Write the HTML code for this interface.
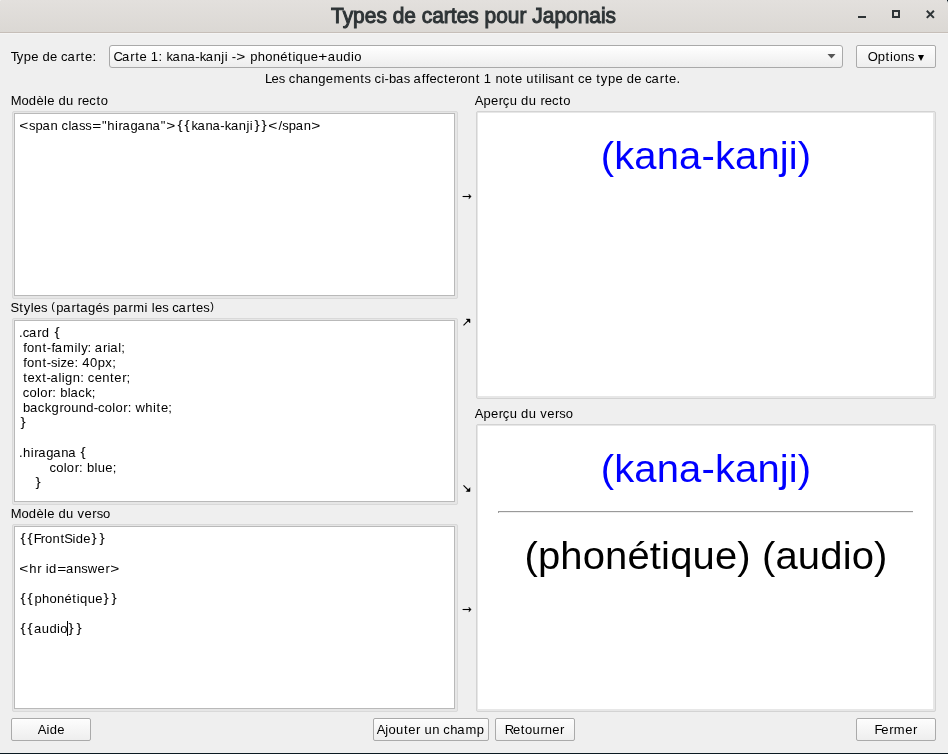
<!DOCTYPE html>
<html><head><meta charset="utf-8"><title>Types de cartes pour Japonais</title>
<style>
html,body{margin:0;padding:0}
body{width:948px;height:754px;position:relative;overflow:hidden;background:#efefef;font-family:"Liberation Sans",sans-serif;color:#000}
.a{position:absolute}
.layer{position:absolute;left:0;top:0;width:948px;height:754px;will-change:transform}
.t{position:absolute;white-space:pre;font-size:13.0px;line-height:15px;color:#000}
.t i{position:absolute;top:0;font-style:normal}
.te{position:absolute;border:1px solid #d9d9d9;border-radius:2px;background:#e6e6e6}
.te2{position:absolute;left:1px;top:1px;right:2px;bottom:2px}
.te3{width:100%;height:100%;box-sizing:border-box;border:1px solid #b9b9b9;background:#fff}
.pv{position:absolute;border:1px solid #d3d3d3;border-radius:2px;background:#e7e7e7}
.pvi{position:absolute;background:#fff}
.btn{position:absolute;border:1px solid #aaaaaa;border-radius:2px;background:linear-gradient(#fdfdfd,#eeeeee);box-shadow:inset 0 1px 0 #fff}
.card{position:absolute;white-space:pre;font-size:40px;line-height:46px;transform-origin:0 37px;transform:scale(1,0.955);letter-spacing:0.14px;left:476px;width:460px;text-align:center}
</style></head><body>
<div class="a" style="left:0;top:0;width:948px;height:32px;background:linear-gradient(#e3e0dd,#dbd8d4)"></div>
<div class="a" style="left:0;top:0;width:1px;height:1px;background:#ecebe9"></div>
<div class="a" style="left:947px;top:0;width:1px;height:1px;background:#0b1a22"></div>
<div class="a" style="left:947px;top:1px;width:1px;height:1px;background:#8c9296"></div>
<div class="a" style="left:947px;top:2px;width:1px;height:1px;background:#cdcfcf"></div>
<div class="a" style="left:0;top:32px;width:948px;height:1px;background:#c6beb8"></div>
<div class="a" style="left:0;top:33px;width:948px;height:1px;background:#f4f4f4"></div>
<div class="a" style="left:858px;top:16px;width:8px;height:2px;background:#2e3436"></div>
<div class="a" style="left:892px;top:10px;width:4px;height:4px;border:2px solid #2e3436"></div>
<svg class="a" style="left:925px;top:9px" width="11" height="11" viewBox="0 0 11 11"><path d="M1.8 1.8 L8.9 8.9 M8.9 1.8 L1.8 8.9" stroke="#2e3436" stroke-width="2"/></svg>

<div class="a" style="left:109px;top:45px;width:732px;height:21px;border:1px solid #a9a9a9;border-radius:3px;background:linear-gradient(#ffffff,#ededed)"></div>
<svg class="a" style="left:827px;top:53px" width="10" height="7" viewBox="0 0 10 7"><path d="M0.5 1 L8.5 1 L4.5 5.5 Z" fill="#555"/></svg>
<div class="btn" style="left:856px;top:45px;width:78px;height:21px"></div>
<svg class="a" style="left:917px;top:54px" width="8" height="8" viewBox="0 0 8 8"><path d="M1 1 L7 1 L4 7 Z" fill="#000"/></svg>

<div class="te" style="left:12px;top:111px;width:444px;height:186px"><div class="te2"><div class="te3"></div></div></div>
<div class="te" style="left:12px;top:318px;width:444px;height:185px"><div class="te2"><div class="te3"></div></div></div>
<div class="te" style="left:12px;top:524px;width:444px;height:186px"><div class="te2"><div class="te3"></div></div></div>
<div class="pv" style="left:476px;top:111px;width:458px;height:286px"><div class="pvi" style="left:1px;top:1px;width:455px;height:283px"></div></div>
<div class="pv" style="left:476px;top:424px;width:458px;height:286px"><div class="pvi" style="left:1px;top:1px;width:455px;height:283px"></div></div>

<svg class="a" style="left:456px;top:186px" width="20" height="20" viewBox="456 186 20 20"><path d="M462.6 196.5 L470 196.5" stroke="#000" stroke-width="1.1"/><path d="M468.9 194.3 L471.1 196.5 L468.9 198.7 L469.7 196.5 Z" fill="#000" stroke="#000" stroke-width="0.6" stroke-linejoin="round"/></svg>
<svg class="a" style="left:456px;top:599px" width="20" height="20" viewBox="456 186 20 20"><path d="M462.6 196.5 L470 196.5" stroke="#000" stroke-width="1.1"/><path d="M468.9 194.3 L471.1 196.5 L468.9 198.7 L469.7 196.5 Z" fill="#000" stroke="#000" stroke-width="0.6" stroke-linejoin="round"/></svg>
<svg class="a" style="left:456px;top:312px" width="20" height="20" viewBox="456 312 20 20"><path d="M463.5 325.3 L469.2 319.6" stroke="#000" stroke-width="1.1"/><path d="M466.2 319.1 L470 319.1 L470 322.9 Z" fill="#000" stroke="#000" stroke-width="0.5" stroke-linejoin="round"/></svg>
<svg class="a" style="left:456px;top:478px" width="20" height="20" viewBox="456 478 20 20"><path d="M463.5 485.3 L469.2 491" stroke="#000" stroke-width="1.1"/><path d="M466.2 491.5 L470 491.5 L470 487.7 Z" fill="#000" stroke="#000" stroke-width="0.5" stroke-linejoin="round"/></svg>

<div class="a" style="left:498px;top:511px;width:415px;height:1px;background:#9a9a9a"></div>
<div class="a" style="left:498px;top:512px;width:1px;height:1px;background:#a0a0a0"></div>
<div class="a" style="left:499px;top:512px;width:414px;height:1px;background:#eeeeee"></div>
<div class="a" style="left:67px;top:621px;width:1px;height:15px;background:#000"></div>

<div class="btn" style="left:11px;top:718px;width:78px;height:21px"></div>
<div class="btn" style="left:373px;top:718px;width:114px;height:21px"></div>
<div class="btn" style="left:495px;top:718px;width:78px;height:21px"></div>
<div class="btn" style="left:856px;top:718px;width:78px;height:21px"></div>
<div class="a" style="left:0;top:753px;width:948px;height:1px;background:#0b1a22"></div>
<div class="layer">
<div class="a" style="left:331px;top:3px;white-space:pre;font-size:21.5px;line-height:25px;color:#2e3436;-webkit-text-stroke:1px #2e3436;transform-origin:0 0;transform:translateY(0.4px) scale(0.9735,1.02)">Types de cartes pour Japonais</div>
<div class="t" style="left:11px;top:49px"><i style="left:-0.30px">T</i><i style="left:5.75px">y</i><i style="left:12.83px">p</i><i style="left:20.29px">e</i><i style="left:31.52px">d</i><i style="left:39.12px">e</i><i style="left:50.12px">c</i><i style="left:56.41px">a</i><i style="left:64.70px">r</i><i style="left:69.62px">t</i><i style="left:73.91px">e</i><i style="left:81.42px">:</i></div>
<div class="t" style="left:114px;top:49px"><i style="left:-0.58px">C</i><i style="left:7.98px">a</i><i style="left:16.26px">r</i><i style="left:21.19px">t</i><i style="left:25.48px">e</i><i style="left:36.71px">1</i><i style="left:44.44px">:</i><i style="left:52.38px">k</i><i style="left:58.43px">a</i><i style="left:66.40px">n</i><i style="left:73.40px">a</i><i style="left:81.16px">-</i><i style="left:85.79px">k</i><i style="left:91.84px">a</i><i style="left:99.81px">n</i><i style="left:107.35px">j</i><i style="left:110.76px">i</i><i style="left:117.67px">-</i><i style="left:123.23px;transform:scaleX(1.19)">&gt;</i><i style="left:136.14px">p</i><i style="left:143.69px">h</i><i style="left:151.17px">o</i><i style="left:158.67px">n</i><i style="left:166.16px">é</i><i style="left:173.97px">t</i><i style="left:178.39px">i</i><i style="left:181.61px">q</i><i style="left:189.27px">u</i><i style="left:196.82px">e</i><i style="left:205.34px;transform:scaleX(1.19)">+</i><i style="left:213.77px">a</i><i style="left:221.69px">u</i><i style="left:229.27px">d</i><i style="left:236.99px">i</i><i style="left:240.15px">o</i></div>
<div class="t" style="left:265px;top:71px"><i style="left:-0.03px">L</i><i style="left:6.59px">e</i><i style="left:13.84px">s</i><i style="left:23.84px">c</i><i style="left:30.73px">h</i><i style="left:37.74px">a</i><i style="left:45.71px">n</i><i style="left:53.24px">g</i><i style="left:60.84px">e</i><i style="left:68.59px">m</i><i style="left:79.91px">e</i><i style="left:87.42px">n</i><i style="left:95.33px">t</i><i style="left:99.48px">s</i><i style="left:109.48px">c</i><i style="left:116.40px">i</i><i style="left:119.50px">-</i><i style="left:124.09px">b</i><i style="left:131.05px">a</i><i style="left:138.77px">s</i><i style="left:148.48px">a</i><i style="left:156.69px">f</i><i style="left:160.74px">f</i><i style="left:164.60px">e</i><i style="left:171.79px">c</i><i style="left:179.00px">t</i><i style="left:183.29px">e</i><i style="left:191.10px">r</i><i style="left:195.31px">o</i><i style="left:202.81px">n</i><i style="left:210.72px">t</i><i style="left:218.85px">1</i><i style="left:230.39px">n</i><i style="left:237.84px">o</i><i style="left:245.64px">t</i><i style="left:249.93px">e</i><i style="left:261.19px">u</i><i style="left:269.15px">t</i><i style="left:273.57px">i</i><i style="left:276.89px">l</i><i style="left:280.23px">i</i><i style="left:283.29px">s</i><i style="left:289.18px">a</i><i style="left:297.15px">n</i><i style="left:305.06px">t</i><i style="left:312.97px">c</i><i style="left:319.76px">e</i><i style="left:331.37px">t</i><i style="left:335.86px">y</i><i style="left:342.94px">p</i><i style="left:350.40px">e</i><i style="left:361.63px">d</i><i style="left:369.23px">e</i><i style="left:380.23px">c</i><i style="left:386.52px">a</i><i style="left:394.80px">r</i><i style="left:399.73px">t</i><i style="left:404.02px">e</i><i style="left:411.41px">.</i></div>
<div class="t" style="left:11px;top:93px"><i style="left:-0.23px">M</i><i style="left:10.42px">o</i><i style="left:17.83px">d</i><i style="left:25.43px">è</i><i style="left:32.94px">l</i><i style="left:36.15px">e</i><i style="left:47.38px">d</i><i style="left:55.04px">u</i><i style="left:66.82px">r</i><i style="left:71.07px">e</i><i style="left:78.26px">c</i><i style="left:85.47px">t</i><i style="left:89.72px">o</i></div>
<div class="t" style="left:475px;top:93px"><i style="left:-0.23px">A</i><i style="left:8.47px">p</i><i style="left:15.93px">e</i><i style="left:23.74px">r</i><i style="left:27.79px">ç</i><i style="left:34.65px">u</i><i style="left:46.03px">d</i><i style="left:53.69px">u</i><i style="left:65.48px">r</i><i style="left:69.73px">e</i><i style="left:76.92px">c</i><i style="left:84.12px">t</i><i style="left:88.37px">o</i></div>
<div class="t" style="left:11px;top:300px"><i style="left:-0.46px">S</i><i style="left:8.14px">t</i><i style="left:12.63px">y</i><i style="left:19.66px">l</i><i style="left:22.87px">e</i><i style="left:30.12px">s</i><i style="left:40.07px;transform:translateY(-1.2px) scale(0.85,0.87)">(</i><i style="left:45.17px">p</i><i style="left:52.13px">a</i><i style="left:60.41px">r</i><i style="left:65.34px">t</i><i style="left:69.13px">a</i><i style="left:77.02px">g</i><i style="left:84.62px">é</i><i style="left:91.87px">s</i><i style="left:102.23px">p</i><i style="left:109.19px">a</i><i style="left:117.48px">r</i><i style="left:122.15px">m</i><i style="left:133.60px">i</i><i style="left:140.74px">l</i><i style="left:143.94px">e</i><i style="left:151.20px">s</i><i style="left:161.20px">c</i><i style="left:167.49px">a</i><i style="left:175.77px">r</i><i style="left:180.70px">t</i><i style="left:184.99px">e</i><i style="left:192.24px">s</i><i style="left:199.04px;transform:translateY(-1.2px) scale(0.85,0.87)">)</i></div>
<div class="t" style="left:475px;top:406px"><i style="left:-0.23px">A</i><i style="left:8.47px">p</i><i style="left:15.93px">e</i><i style="left:23.74px">r</i><i style="left:27.79px">ç</i><i style="left:34.65px">u</i><i style="left:46.03px">d</i><i style="left:53.69px">u</i><i style="left:65.25px">v</i><i style="left:72.16px">e</i><i style="left:79.98px">r</i><i style="left:84.35px">s</i><i style="left:90.70px">o</i></div>
<div class="t" style="left:11px;top:506px"><i style="left:-0.23px">M</i><i style="left:10.42px">o</i><i style="left:17.83px">d</i><i style="left:25.43px">è</i><i style="left:32.94px">l</i><i style="left:36.15px">e</i><i style="left:47.38px">d</i><i style="left:55.04px">u</i><i style="left:66.60px">v</i><i style="left:73.51px">e</i><i style="left:81.32px">r</i><i style="left:85.70px">s</i><i style="left:92.04px">o</i></div>
<div class="t" style="left:19px;top:118px"><i style="left:1.23px;transform:scaleX(1.19)">&lt;</i><i style="left:10.02px">s</i><i style="left:16.58px">p</i><i style="left:23.54px">a</i><i style="left:31.51px">n</i><i style="left:42.62px">c</i><i style="left:49.54px">l</i><i style="left:52.24px">a</i><i style="left:59.96px">s</i><i style="left:66.21px">s</i><i style="left:73.73px;transform:scaleX(1.19)">=</i><i style="left:83.01px">"</i><i style="left:88.27px">h</i><i style="left:95.92px">i</i><i style="left:99.54px">r</i><i style="left:103.55px">a</i><i style="left:111.44px">g</i><i style="left:118.54px">a</i><i style="left:126.51px">n</i><i style="left:133.51px">a</i><i style="left:141.72px">"</i><i style="left:148.01px;transform:scaleX(1.19)">&gt;</i><i style="left:158.50px;transform:translateY(-1px) scale(1.19,0.97)">{</i><i style="left:166.14px;transform:translateY(-1px) scale(1.19,0.97)">{</i><i style="left:172.43px">k</i><i style="left:178.48px">a</i><i style="left:186.45px">n</i><i style="left:193.44px">a</i><i style="left:201.20px">-</i><i style="left:205.84px">k</i><i style="left:211.88px">a</i><i style="left:219.85px">n</i><i style="left:227.40px">j</i><i style="left:230.81px">i</i><i style="left:235.56px;transform:translateY(-1px) scale(1.19,0.97)">}</i><i style="left:243.20px;transform:translateY(-1px) scale(1.19,0.97)">}</i><i style="left:250.42px;transform:scaleX(1.19)">&lt;</i><i style="left:259.47px">/</i><i style="left:263.26px">s</i><i style="left:269.81px">p</i><i style="left:276.77px">a</i><i style="left:284.74px">n</i><i style="left:293.37px;transform:scaleX(1.19)">&gt;</i></div>
<div class="t" style="left:19px;top:325px"><i style="left:0.10px">.</i><i style="left:3.72px">c</i><i style="left:10.01px">a</i><i style="left:18.29px">r</i><i style="left:22.63px">d</i><i style="left:35.59px;transform:translateY(-1px) scale(1.19,0.97)">{</i></div>
<div class="t" style="left:19px;top:340px"><i style="left:4.27px">f</i><i style="left:8.09px">o</i><i style="left:15.59px">n</i><i style="left:23.50px">t</i><i style="left:27.69px">-</i><i style="left:32.47px">f</i><i style="left:35.84px">a</i><i style="left:44.06px">m</i><i style="left:55.51px">i</i><i style="left:58.83px">l</i><i style="left:62.24px">y</i><i style="left:68.39px">:</i><i style="left:75.63px">a</i><i style="left:83.91px">r</i><i style="left:88.56px">i</i><i style="left:91.26px">a</i><i style="left:99.24px">l</i><i style="left:102.32px">;</i></div>
<div class="t" style="left:19px;top:355px"><i style="left:4.27px">f</i><i style="left:8.09px">o</i><i style="left:15.59px">n</i><i style="left:23.50px">t</i><i style="left:27.69px">-</i><i style="left:31.98px">s</i><i style="left:38.49px">i</i><i style="left:41.55px">z</i><i style="left:47.99px">e</i><i style="left:55.50px">:</i><i style="left:63.34px">4</i><i style="left:70.98px">0</i><i style="left:78.69px">p</i><i style="left:86.32px">x</i><i style="left:93.13px">;</i></div>
<div class="t" style="left:19px;top:370px"><i style="left:4.33px">t</i><i style="left:8.62px">e</i><i style="left:15.98px">x</i><i style="left:23.33px">t</i><i style="left:27.52px">-</i><i style="left:31.44px">a</i><i style="left:39.43px">l</i><i style="left:42.76px">i</i><i style="left:45.99px">g</i><i style="left:53.70px">n</i><i style="left:61.31px">:</i><i style="left:68.86px">c</i><i style="left:75.65px">e</i><i style="left:83.15px">n</i><i style="left:91.06px">t</i><i style="left:95.35px">e</i><i style="left:103.16px">r</i><i style="left:107.56px">;</i></div>
<div class="t" style="left:19px;top:385px"><i style="left:3.72px">c</i><i style="left:10.47px">o</i><i style="left:17.97px">l</i><i style="left:21.14px">o</i><i style="left:28.95px">r</i><i style="left:33.37px">:</i><i style="left:41.28px">b</i><i style="left:48.86px">l</i><i style="left:51.57px">a</i><i style="left:59.23px">c</i><i style="left:66.23px">k</i><i style="left:72.85px">;</i></div>
<div class="t" style="left:19px;top:400px"><i style="left:4.08px">b</i><i style="left:11.04px">a</i><i style="left:18.70px">c</i><i style="left:25.70px">k</i><i style="left:32.47px">g</i><i style="left:40.49px">r</i><i style="left:44.70px">o</i><i style="left:52.15px">u</i><i style="left:59.81px">n</i><i style="left:67.33px">d</i><i style="left:74.83px">-</i><i style="left:79.06px">c</i><i style="left:85.81px">o</i><i style="left:93.32px">l</i><i style="left:96.48px">o</i><i style="left:104.29px">r</i><i style="left:108.72px">:</i><i style="left:116.57px">w</i><i style="left:126.37px">h</i><i style="left:134.01px">i</i><i style="left:137.62px">t</i><i style="left:141.91px">e</i><i style="left:149.18px">;</i></div>
<div class="t" style="left:19px;top:415px"><i style="left:1.66px;transform:translateY(-1px) scale(1.19,0.97)">}</i></div>
<div class="t" style="left:19px;top:445px"><i style="left:0.10px">.</i><i style="left:4.01px">h</i><i style="left:11.65px">i</i><i style="left:15.27px">r</i><i style="left:19.29px">a</i><i style="left:27.17px">g</i><i style="left:34.27px">a</i><i style="left:42.24px">n</i><i style="left:49.24px">a</i><i style="left:62.47px;transform:translateY(-1px) scale(1.19,0.97)">{</i></div>
<div class="t" style="left:19px;top:460px"><i style="left:30.40px">c</i><i style="left:37.15px">o</i><i style="left:44.66px">l</i><i style="left:47.82px">o</i><i style="left:55.63px">r</i><i style="left:60.06px">:</i><i style="left:67.97px">b</i><i style="left:75.55px">l</i><i style="left:78.82px">u</i><i style="left:86.37px">e</i><i style="left:93.63px">;</i></div>
<div class="t" style="left:19px;top:475px"><i style="left:16.91px;transform:translateY(-1px) scale(1.19,0.97)">}</i></div>
<div class="t" style="left:19px;top:531px"><i style="left:1.65px;transform:translateY(-1px) scale(1.19,0.97)">{</i><i style="left:9.29px;transform:translateY(-1px) scale(1.19,0.97)">{</i><i style="left:14.73px">F</i><i style="left:21.84px">r</i><i style="left:26.04px">o</i><i style="left:33.54px">n</i><i style="left:41.45px">t</i><i style="left:45.18px">S</i><i style="left:53.49px">i</i><i style="left:56.72px">d</i><i style="left:64.32px">e</i><i style="left:73.27px;transform:translateY(-1px) scale(1.19,0.97)">}</i><i style="left:80.91px;transform:translateY(-1px) scale(1.19,0.97)">}</i></div>
<div class="t" style="left:19px;top:561px"><i style="left:1.23px;transform:scaleX(1.19)">&lt;</i><i style="left:10.26px">h</i><i style="left:18.20px">r</i><i style="left:26.65px">i</i><i style="left:29.88px">d</i><i style="left:38.61px;transform:scaleX(1.19)">=</i><i style="left:47.04px">a</i><i style="left:55.01px">n</i><i style="left:62.37px">s</i><i style="left:68.86px">w</i><i style="left:78.57px">e</i><i style="left:86.38px">r</i><i style="left:92.03px;transform:scaleX(1.19)">&gt;</i></div>
<div class="t" style="left:19px;top:591px"><i style="left:1.65px;transform:translateY(-1px) scale(1.19,0.97)">{</i><i style="left:9.29px;transform:translateY(-1px) scale(1.19,0.97)">{</i><i style="left:15.55px">p</i><i style="left:23.10px">h</i><i style="left:30.57px">o</i><i style="left:38.07px">n</i><i style="left:45.57px">é</i><i style="left:53.37px">t</i><i style="left:57.79px">i</i><i style="left:61.01px">q</i><i style="left:68.68px">u</i><i style="left:76.23px">e</i><i style="left:85.17px;transform:translateY(-1px) scale(1.19,0.97)">}</i><i style="left:92.81px;transform:translateY(-1px) scale(1.19,0.97)">}</i></div>
<div class="t" style="left:19px;top:621px"><i style="left:1.65px;transform:translateY(-1px) scale(1.19,0.97)">{</i><i style="left:9.29px;transform:translateY(-1px) scale(1.19,0.97)">{</i><i style="left:14.88px">a</i><i style="left:22.80px">u</i><i style="left:30.38px">d</i><i style="left:38.10px">i</i><i style="left:41.26px">o</i><i style="left:50.20px;transform:translateY(-1px) scale(1.19,0.97)">}</i><i style="left:57.84px;transform:translateY(-1px) scale(1.19,0.97)">}</i></div>
<div class="t" style="left:38px;top:722px"><i style="left:-0.23px">A</i><i style="left:8.43px">i</i><i style="left:11.66px">d</i><i style="left:19.26px">e</i></div>
<div class="t" style="left:377px;top:722px"><i style="left:-0.23px">A</i><i style="left:8.35px">j</i><i style="left:11.59px">o</i><i style="left:19.04px">u</i><i style="left:27.00px">t</i><i style="left:31.29px">e</i><i style="left:39.10px">r</i><i style="left:47.49px">u</i><i style="left:55.15px">n</i><i style="left:66.26px">c</i><i style="left:73.15px">h</i><i style="left:80.16px">a</i><i style="left:88.38px">m</i><i style="left:99.87px">p</i></div>
<div class="t" style="left:505px;top:722px"><i style="left:-0.34px">R</i><i style="left:7.91px">e</i><i style="left:15.72px">t</i><i style="left:19.97px">o</i><i style="left:27.41px">u</i><i style="left:35.38px">r</i><i style="left:39.81px">n</i><i style="left:47.30px">e</i><i style="left:55.12px">r</i></div>
<div class="t" style="left:875px;top:722px"><i style="left:-0.55px">F</i><i style="left:6.35px">e</i><i style="left:14.16px">r</i><i style="left:18.84px">m</i><i style="left:30.16px">e</i><i style="left:37.98px">r</i></div>
<div class="t" style="left:868px;top:49px"><i style="left:-0.33px">O</i><i style="left:9.72px">p</i><i style="left:17.59px">t</i><i style="left:22.01px">i</i><i style="left:25.17px">o</i><i style="left:32.67px">n</i><i style="left:40.02px">s</i></div>
<div class="card" style="top:132px;color:#0000ff">(kana-kanji)</div>
<div class="card" style="top:445px;color:#0000ff">(kana-kanji)</div>
<div class="card" style="top:532px;color:#000">(phonétique) (audio)</div>
</div>
</body></html>
